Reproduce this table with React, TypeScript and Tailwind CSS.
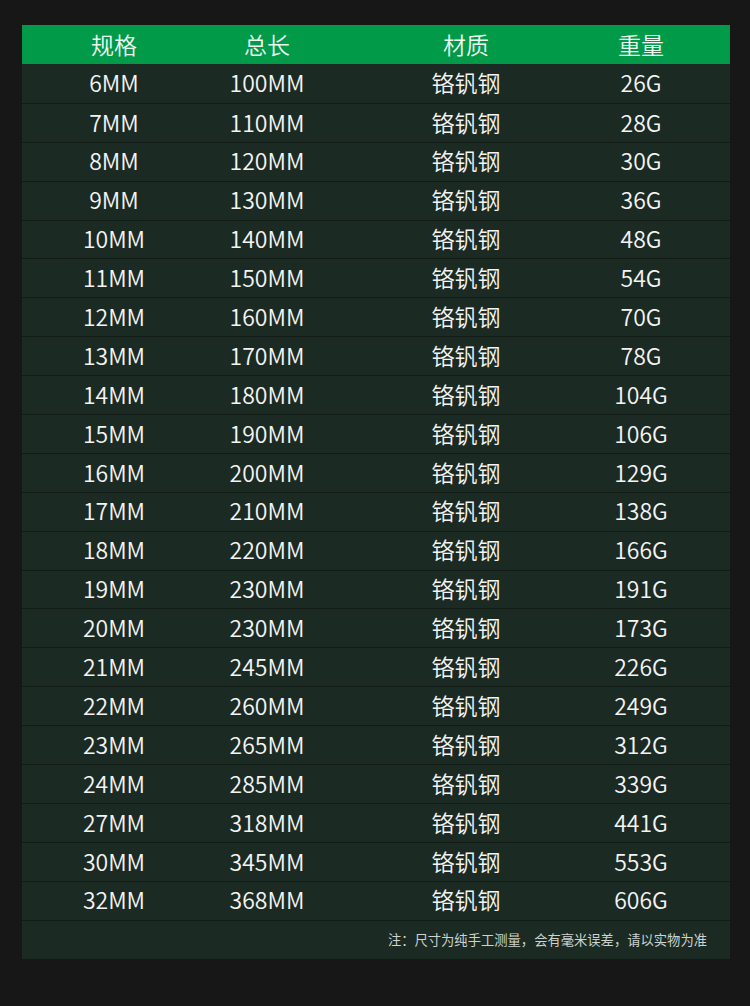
import React from 'react';

const rows: [string, string, string][] = [
  ['6MM', '100MM', '26G'],
  ['7MM', '110MM', '28G'],
  ['8MM', '120MM', '30G'],
  ['9MM', '130MM', '36G'],
  ['10MM', '140MM', '48G'],
  ['11MM', '150MM', '54G'],
  ['12MM', '160MM', '70G'],
  ['13MM', '170MM', '78G'],
  ['14MM', '180MM', '104G'],
  ['15MM', '190MM', '106G'],
  ['16MM', '200MM', '129G'],
  ['17MM', '210MM', '138G'],
  ['18MM', '220MM', '166G'],
  ['19MM', '230MM', '191G'],
  ['20MM', '230MM', '173G'],
  ['21MM', '245MM', '226G'],
  ['22MM', '260MM', '249G'],
  ['23MM', '265MM', '312G'],
  ['24MM', '285MM', '339G'],
  ['27MM', '318MM', '441G'],
  ['30MM', '345MM', '553G'],
  ['32MM', '368MM', '606G'],
];

const cols = 'grid grid-cols-[184px_122px_276px_74px] items-center text-center';

export default function App() {
  return (
    <div className="w-[750px] h-[1006px] bg-[#171717] pt-[25px] pl-[22px] font-['Noto_Sans_CJK_SC',sans-serif]">
      <div className="w-[708px] bg-[#1b2a23]">
        <div className={`${cols} h-[39px] bg-[#009a49] text-[23px] font-[350] text-[#eef8f1]`}>
          <span>规格</span>
          <span>总长</span>
          <span>材质</span>
          <span>重量</span>
        </div>
        {rows.map(([size, len, weight], i) => (
          <div
            key={size}
            className={`${cols} h-[38.9px] pb-[2px] text-[23px] font-[350] text-[#f4f4f4] ${i > 0 ? 'border-t border-[#131b17]' : ''}`}
          >
            <span>{size}</span>
            <span>{len}</span>
            <span>铬钒钢</span>
            <span>{weight}</span>
          </div>
        ))}
        <div className="h-[39px] border-t border-[#131b17] flex items-center justify-end pr-[23px] text-[13.3px] text-[#cdd3cf]">
          注：尺寸为纯手工测量，会有毫米误差，请以实物为准
        </div>
      </div>
    </div>
  );
}
